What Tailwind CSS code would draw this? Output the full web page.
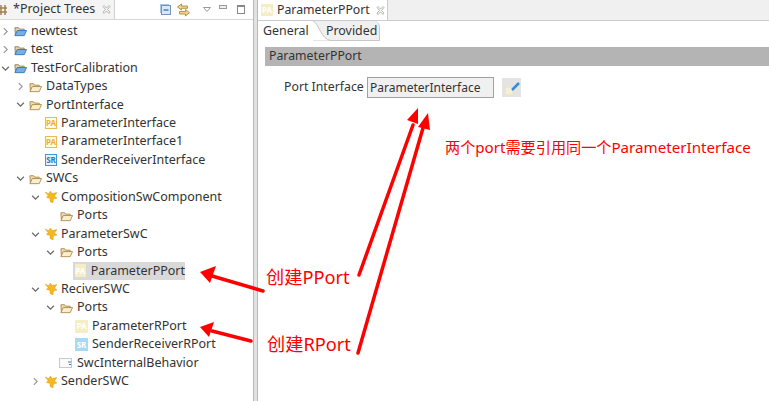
<!doctype html>
<html>
  <head>
    <title>Project Trees</title>
    <meta charset="utf-8" />
    <script src="https://cdn.jsdelivr.net/npm/@tailwindcss/browser@4"></script>
  </head>
  <body class="bg-white">
    <svg class="hidden">
      <symbol id="open" viewBox="0 0 14 12"><path d="M1 2.500h4l1 1.500h5v1.500H4L1.500 10.500z" fill="#f3dcae" stroke="#a98a52" stroke-width="1"/><path d="M3.500 5.500h10L11 11H1z" fill="#fbeecb" stroke="#b08f50" stroke-width="1"/></symbol>
      <symbol id="blue" viewBox="0 0 14 12"><path d="M1 2.500h4l1 1.500h5v1.500H4L1.500 10.500z" fill="#e9d49f" stroke="#8a7f60" stroke-width="1"/><path d="M3.500 5.500h10L11 11H1z" fill="#77aee6" stroke="#3a78b8" stroke-width="1"/></symbol>
      <symbol id="swc" viewBox="0 0 12 12"><path d="M0 1l3.500 1.500L5.500 0l1.500 2.500L12 1.500 9.500 5l2.500 2-3.500 1L8 12 5 10.500V7.500L1.500 6.500 3 4.500z" fill="#f5b81e" stroke="#d39a16" stroke-width=".4"/></symbol>
      <symbol id="chevr" viewBox="0 0 8 8"><path d="M2.500 1l3 3-3 3" fill="none" stroke="#9a9a9a" stroke-width="1.100"/></symbol>
      <symbol id="chevd" viewBox="0 0 8 8"><path d="M1 2.500l3 3 3-3" fill="none" stroke="#6a6a6a" stroke-width="1.100"/></symbol>
      <symbol id="close" viewBox="0 0 9 9"><path d="M1 1.500L2 .5l2.500 2.500L7 .5l1 1-2.500 3L8 7l-1 1.500-2.500-2.500L2 8.500 1 7l2.500-2.500z" fill="#f4f4f4" stroke="#a8a8a8" stroke-width=".8"/></symbol>
    </svg>

    <div class="relative flex h-[401px] w-[769px] overflow-hidden font-['Noto_Sans','Noto_Sans_CJK_SC',sans-serif] text-[12.5px] text-[#333]">
      <!-- left view -->
      <div class="w-[253px] shrink-0">
        <div class="flex h-[20px] items-center border-b border-[#d8d8d8]">
          <div class="flex h-full w-[115px] items-center border-r border-[#d0d0d0] bg-[#f4f4f4]">
            <svg class="mr-[5px] -ml-[1px]" width="9" height="12" viewBox="0 0 9 12"><path d="M2 1v10M6 1v10M0 4h8M0 8h8" stroke="#a08050" stroke-width="1.500" fill="none"/></svg>
            <span class="whitespace-nowrap leading-none">*Project Trees</span>
            <svg class="ml-[7px] h-[9px] w-[9px]"><use href="#close"/></svg>
          </div>
          <div class="ml-[45px] flex items-center">
            <svg width="11" height="11" viewBox="0 0 11 11"><rect width="9" height="9" fill="#a9c4e6"/><rect x="1.500" y="1.500" width="9" height="9" fill="#dbe7f5" stroke="#6f95c8"/><path d="M3.500 6h5" stroke="#3b6cb0" stroke-width="1.300"/></svg>
            <svg class="ml-[6px]" width="13" height="14" viewBox="0 0 13 14"><path d="M4.500 1L.5 4l4 3V5.300h6V3h-6z" fill="#f2d48c" stroke="#b08a38" stroke-width=".9"/><path d="M8.500 6.500l4 3.200-4 3.300V11h-6V8.500h6z" fill="#f2d48c" stroke="#b08a38" stroke-width=".9"/></svg>
            <svg class="ml-[13px]" width="8" height="5" viewBox="0 0 8 5"><path d="M.5.500h7L4 4.500z" fill="#fff" stroke="#999"/></svg>
            <span class="ml-[8px] mb-[6px] h-[4px] w-[8px] border border-[#999] bg-[#eee]"></span>
            <span class="ml-[10px] h-[9px] w-[8px] border border-t-2 border-[#888] bg-white"></span>
          </div>
        </div>
        <div class="pt-[2px]">
          <div class="flex h-[18.45px] items-center pl-[1px]"><svg class="h-[9px] w-[9px]"><use href="#chevr"/></svg><svg class="ml-[4px] mr-[4px] h-[12px] w-[13px]"><use href="#blue"/></svg>newtest</div>
          <div class="flex h-[18.45px] items-center pl-[1px]"><svg class="h-[9px] w-[9px]"><use href="#chevr"/></svg><svg class="ml-[4px] mr-[4px] h-[12px] w-[13px]"><use href="#blue"/></svg>test</div>
          <div class="flex h-[18.45px] items-center pl-[1px]"><svg class="h-[9px] w-[9px]"><use href="#chevd"/></svg><svg class="ml-[4px] mr-[4px] h-[12px] w-[13px]"><use href="#blue"/></svg>TestForCalibration</div>
          <div class="flex h-[18.45px] items-center pl-[16px]"><svg class="h-[9px] w-[9px]"><use href="#chevr"/></svg><svg class="ml-[4px] mr-[4px] h-[12px] w-[13px]"><use href="#open"/></svg>DataTypes</div>
          <div class="flex h-[18.45px] items-center pl-[16px]"><svg class="h-[9px] w-[9px]"><use href="#chevd"/></svg><svg class="ml-[4px] mr-[4px] h-[12px] w-[13px]"><use href="#open"/></svg>PortInterface</div>
          <div class="flex h-[18.45px] items-center pl-[45px]"><span class="mr-[4px] flex h-[12px] w-[12px] items-center justify-center border border-[#e9bb50] bg-[#fffbe6] text-[8px] font-bold leading-none text-[#eeb030]">PA</span>ParameterInterface</div>
          <div class="flex h-[18.45px] items-center pl-[45px]"><span class="mr-[4px] flex h-[12px] w-[12px] items-center justify-center border border-[#e9bb50] bg-[#fffbe6] text-[8px] font-bold leading-none text-[#eeb030]">PA</span>ParameterInterface1</div>
          <div class="flex h-[18.45px] items-center pl-[45px]"><span class="mr-[4px] flex h-[12px] w-[12px] items-center justify-center border border-[#3c9ad8] bg-[#e4f3fc] text-[8px] font-bold leading-none text-[#1f7fc4]">SR</span>SenderReceiverInterface</div>
          <div class="flex h-[18.45px] items-center pl-[16px]"><svg class="h-[9px] w-[9px]"><use href="#chevd"/></svg><svg class="ml-[4px] mr-[4px] h-[12px] w-[13px]"><use href="#open"/></svg>SWCs</div>
          <div class="flex h-[18.45px] items-center pl-[31px]"><svg class="h-[9px] w-[9px]"><use href="#chevd"/></svg><svg class="ml-[5px] mr-[4px] h-[12px] w-[12px]"><use href="#swc"/></svg>CompositionSwComponent</div>
          <div class="flex h-[18.45px] items-center pl-[60px]"><svg class="mr-[4px] h-[12px] w-[13px]"><use href="#open"/></svg>Ports</div>
          <div class="flex h-[18.45px] items-center pl-[31px]"><svg class="h-[9px] w-[9px]"><use href="#chevd"/></svg><svg class="ml-[5px] mr-[4px] h-[12px] w-[12px]"><use href="#swc"/></svg>ParameterSwC</div>
          <div class="flex h-[18.45px] items-center pl-[46px]"><svg class="h-[9px] w-[9px]"><use href="#chevd"/></svg><svg class="ml-[5px] mr-[4px] h-[12px] w-[13px]"><use href="#open"/></svg>Ports</div>
          <div class="flex h-[18.45px] items-center pl-[73px]"><div class="flex h-full w-[112px] items-center bg-[#d9d9d9] pl-[2px]"><span class="mr-[5px] flex h-[13px] w-[13px] items-center justify-center bg-[#f5edc4] text-[8px] font-bold leading-none text-white">PA</span>ParameterPPort</div></div>
          <div class="flex h-[18.45px] items-center pl-[31px]"><svg class="h-[9px] w-[9px]"><use href="#chevd"/></svg><svg class="ml-[5px] mr-[4px] h-[12px] w-[12px]"><use href="#swc"/></svg>ReciverSWC</div>
          <div class="flex h-[18.45px] items-center pl-[46px]"><svg class="h-[9px] w-[9px]"><use href="#chevd"/></svg><svg class="ml-[5px] mr-[4px] h-[12px] w-[13px]"><use href="#open"/></svg>Ports</div>
          <div class="flex h-[18.45px] items-center pl-[75px]"><span class="mr-[4px] flex h-[13px] w-[13px] items-center justify-center bg-[#f5edc4] text-[8px] font-bold leading-none text-white">PA</span>ParameterRPort</div>
          <div class="flex h-[18.45px] items-center pl-[75px]"><span class="mr-[4px] flex h-[13px] w-[13px] items-center justify-center bg-[#a6daf3] text-[8px] font-bold leading-none text-white">SR</span>SenderReceiverRPort</div>
          <div class="flex h-[18.45px] items-center pl-[59px]"><svg class="mr-[4px]" width="14" height="12" viewBox="0 0 14 12"><rect x=".5" y="1.500" width="12" height="9" fill="#fafafa" stroke="#c8c8c8"/><path d="M9 5h3M10 7.500h2" stroke="#3c78b0"/></svg>SwcInternalBehavior</div>
          <div class="flex h-[18.45px] items-center pl-[31px]"><svg class="h-[9px] w-[9px]"><use href="#chevr"/></svg><svg class="ml-[5px] mr-[4px] h-[12px] w-[12px]"><use href="#swc"/></svg>SenderSWC</div>
        </div>
      </div>

      <!-- sash -->
      <div class="w-[5px] shrink-0 border-x border-[#b8b8b8] bg-[#e2e2e2]"></div>

      <!-- right editor -->
      <div class="flex-1">
        <div class="flex h-[21px] border-b border-[#ccc] bg-[#f0f0f0]">
          <div class="flex w-[130px] items-center border-r border-[#ccc] bg-white pl-[3px]">
            <span class="mr-[4px] flex h-[12px] w-[12px] items-center justify-center bg-[#f5edc4] text-[8px] font-bold leading-none text-white">PA</span>
            <span class="text-[12.3px]">ParameterPPort</span>
            <svg class="ml-[6px] h-[9px] w-[9px]"><use href="#close"/></svg>
          </div>
        </div>
        <div class="flex h-[20px] text-[12.4px]">
          <div class="flex h-full w-[55px] items-center pl-[5px] pt-[1px]">General</div>
          <div class="relative flex h-full w-[67px] items-center rounded-tr-[6px] border-r border-b border-[#c8c8c8] bg-[#f0f0f0] pl-[13px] pt-[1px]">
            <svg class="absolute top-0 left-0" width="18" height="20" viewBox="0 0 18 20"><path d="M0 0C6 2 8 19 18 19.500H0z" fill="#fff" stroke="none"/><path d="M0 0C6 2 8 19 18 19.500" fill="none" stroke="#c8c8c8"/></svg>
            <span class="relative">Provided</span>
          </div>
        </div>
        <div class="pl-[7px] pt-[6px]">
          <div class="flex h-[19px] items-center bg-[#b4b4b4] pl-[4px] text-[12.3px]">ParameterPPort</div>
          <div class="mt-[11px] flex items-center pl-[19px] text-[12.3px]">
            <span class="w-[79px] whitespace-nowrap">Port Interface</span>
            <div class="ml-[4px] flex h-[21px] w-[127px] items-center border border-[#a0a0a0] bg-[#f0f0f0] pl-[2px] text-[12px]">ParameterInterface</div>
            <div class="ml-[8px] flex h-[19px] w-[19px] items-center justify-center bg-[#e4e4e4]">
              <svg width="18" height="16" viewBox="0 0 18 16"><path d="M2 7h6l2 2v6H2z" fill="#f6efd8" stroke="#e6e0cc"/><path d="M9 10l7-7" stroke="#2f8fd8" stroke-width="2.500"/></svg>
            </div>
          </div>
        </div>
      </div>

      <!-- annotations -->
      <svg class="absolute inset-0" width="769" height="401" viewBox="0 0 769 401">
        <g stroke="#ff0000" stroke-width="3.500" stroke-linecap="round" fill="none">
          <path d="M359 275L413 125"/>
          <path d="M358 353L423 128"/>
          <path d="M263 291L212 276"/>
          <path d="M251 341L212 331"/>
        </g>
        <g fill="#ff0000">
          <path d="M418 108L407 120L418 124z"/>
          <path d="M428 113L418 127L430 130z"/>
          <path d="M200 272L216 266L210 283z"/>
          <path d="M200 327L214 322L209 337z"/>
        </g>
      </svg>
      <span class="absolute left-[445px] top-[137px] text-[15.15px] leading-[20px] text-[#ff0000]">两个port需要引用同一个ParameterInterface</span>
      <span class="absolute left-[266px] top-[265px] text-[18.2px] leading-[24px] text-[#ff0000]">创建PPort</span>
      <span class="absolute left-[267px] top-[332px] text-[18.2px] leading-[24px] text-[#ff0000]">创建RPort</span>
    </div>
  </body>
</html>
